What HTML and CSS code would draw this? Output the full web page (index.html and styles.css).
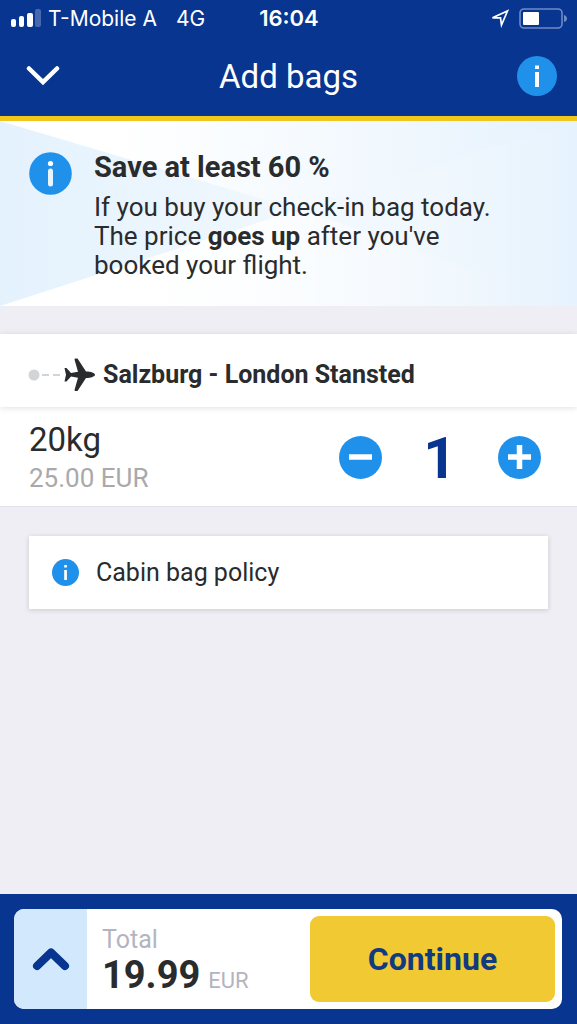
FILE: index.html
```html
<!DOCTYPE html>
<html lang="en">
<head>
  <meta charset="UTF-8">
  <meta name="viewport" content="width=device-width, initial-scale=1.0">
  <title>Add bags</title>
  <link rel="stylesheet" href="styles.css">
</head>
<body>

  <header class="header">
    <div class="status">
      <div class="status__left">
        <svg class="status__signal" width="30" height="18" viewBox="0 0 30 18" aria-hidden="true">
          <rect x="0" y="10" width="5" height="8" rx="2" fill="#fff"/>
          <rect x="8" y="7" width="5" height="11" rx="2" fill="#fff"/>
          <rect x="16" y="4" width="6" height="14" rx="2" fill="#fff"/>
          <rect x="24" y="0" width="6" height="18" rx="2" fill="#4668ae"/>
        </svg>
        <span>T-Mobile A</span>
        <span class="status__network">4G</span>
      </div>
      <time class="status__time">16:04</time>
      <div class="status__right">
        <svg width="20" height="20" viewBox="0 0 20 20" aria-hidden="true">
          <path d="M2.500 9.800 17.500 3 11.500 17 10.500 9.800Z" fill="none" stroke="#fff" stroke-width="1.700"/>
        </svg>
        <svg width="48" height="21" viewBox="0 0 48 21" aria-hidden="true">
          <rect x="1" y="1" width="42" height="19" rx="4" fill="none" stroke="#6f8bc8" stroke-width="1.600"/>
          <rect x="4" y="4" width="16" height="13" rx="1" fill="#fff"/>
          <path d="M45 7c2 .5 3 2 3 3.500s-1 3-3 3.500z" fill="#6f8bc8"/>
        </svg>
      </div>
    </div>

    <div class="navbar">
      <button class="navbar__btn navbar__btn--close" type="button" aria-label="Close">
        <svg width="34" height="22" viewBox="0 0 34 22">
          <path d="M3 3.500 17 17 31 3.500" fill="none" stroke="#fff" stroke-width="4.500" stroke-linecap="round" stroke-linejoin="miter"/>
        </svg>
      </button>
      <h1 class="navbar__title">Add bags</h1>
      <button class="navbar__btn navbar__btn--info" type="button" aria-label="Information">
        <svg width="40" height="40" viewBox="0 0 40 40">
          <circle cx="20" cy="20" r="20" fill="#2091eb"/>
          <path d="M18 9.500h4v3.500h-4zM18 16h4v15h-4z" fill="#fff"/>
        </svg>
      </button>
    </div>
  </header>

  <main class="content">
    <section class="promo">
      <svg class="promo__bg" viewBox="0 0 577 185" preserveAspectRatio="none" aria-hidden="true">
        <defs>
          <linearGradient id="sky" x1="0.2" y1="0" x2="1" y2="0">
            <stop offset="0" stop-color="#fff"/>
            <stop offset=".5" stop-color="#f3f9fe"/>
            <stop offset="1" stop-color="#e6f2fd"/>
          </linearGradient>
          <linearGradient id="fade" x1="0" y1="0" x2="1" y2="0">
            <stop offset="0" stop-color="#e4f2fd"/>
            <stop offset=".5" stop-color="#f1f8fe"/>
            <stop offset="1" stop-color="#eaf4fe" stop-opacity="0"/>
          </linearGradient>
          <linearGradient id="glow" x1="0" y1="0" x2="1" y2="0">
            <stop offset="0" stop-color="#fff"/>
            <stop offset="1" stop-color="#fff" stop-opacity="0"/>
          </linearGradient>
        </defs>
        <rect width="577" height="185" fill="url(#sky)"/>
        <path d="M0 185 300 88 577 0v185z" fill="url(#glow)"/>
        <path d="M0 0 310 92 577 185 577 0 300 88 0 185z" fill="url(#fade)"/>
      </svg>
      <svg class="promo__icon" width="43" height="43" viewBox="0 0 43 43" aria-hidden="true">
        <circle cx="21.500" cy="21.500" r="21.300" fill="#2091eb"/>
        <circle cx="21.500" cy="11.500" r="2.600" fill="#fff"/>
        <path d="M21.500 19v13" stroke="#e8f4fe" stroke-width="5" stroke-linecap="round"/>
      </svg>
      <div class="promo__text">
        <h2 class="promo__title">Save at least 60 %</h2>
        <p class="promo__body">If you buy your check-in bag today.<br>The price <strong>goes up</strong> after you've<br>booked your flight.</p>
      </div>
    </section>

    <section class="flight">
      <div class="flight__route">
        <svg width="68" height="34" viewBox="0 0 68 34" aria-hidden="true">
          <circle cx="6" cy="17" r="5.500" fill="#d3d4d6"/>
          <path d="M14 17h7M25 17h7" stroke="#d3d4d6" stroke-width="2"/>
          <path d="M36.500 10h2l4.500 5 7-1.200L46.500 1.500q0-1 1-1h2L58 13.500c5 0 9 1.500 9 3.300s-4 3.300-9 3.300L49.500 33h-2q-1 0-1-1L50 19.800l-7-1.200-4.500 5h-2l1.500-6.800z" fill="#2a2b2d"/>
        </svg>
        <h2 class="flight__name">Salzburg - London Stansted</h2>
      </div>
      <div class="bag">
        <div class="bag__info">
          <div class="bag__weight">20kg</div>
          <div class="bag__price">25.00 EUR</div>
        </div>
        <div class="counter">
          <button class="counter__btn" type="button" aria-label="Remove bag">
            <svg width="43" height="43" viewBox="0 0 43 43">
              <circle cx="21.500" cy="21.500" r="21.500" fill="#2091eb"/>
              <path d="M10 21h23" stroke="#fff" stroke-width="5.500"/>
            </svg>
          </button>
          <output class="counter__value">1</output>
          <button class="counter__btn" type="button" aria-label="Add bag">
            <svg width="43" height="43" viewBox="0 0 43 43">
              <circle cx="21.500" cy="21.500" r="21.500" fill="#2091eb"/>
              <path d="M10 21h23M21.500 9v24" stroke="#fff" stroke-width="5.500"/>
            </svg>
          </button>
        </div>
      </div>
    </section>

    <a class="policy" href="#cabin-bag-policy">
      <svg width="27" height="27" viewBox="0 0 27 27" aria-hidden="true">
        <circle cx="13.500" cy="13.500" r="13.500" fill="#2091eb"/>
        <path d="M12.200 6h2.700v2.500h-2.700zM12.200 11h2.700v10h-2.700z" fill="#fff"/>
      </svg>
      Cabin bag policy
    </a>
  </main>

  <footer class="footer">
    <div class="summary">
      <button class="summary__toggle" type="button" aria-label="Show price details">
        <svg width="38" height="24" viewBox="0 0 38 24">
          <path d="M5 19 19 5.500 33 19" fill="none" stroke="#073590" stroke-width="8" stroke-linecap="round" stroke-linejoin="round"/>
        </svg>
      </button>
      <div class="summary__total">
        <div class="summary__label">Total</div>
        <div class="summary__price">19.99<span class="summary__currency">EUR</span></div>
      </div>
      <button class="summary__continue" type="button">Continue</button>
    </div>
  </footer>

</body>
</html>
```
FILE: styles.css
```css
* {
  box-sizing: border-box;
}
body {
  display: flex;
  flex-direction: column;
  min-height: 100vh;
  margin: 0;
  background: #efeef4;
  color: #2a2b2d;
  font-family: Roboto, "Liberation Sans", sans-serif;
}
h1, h2, p {
  margin: 0;
}
button {
  padding: 0;
  border: 0;
  background: none;
  font-family: inherit;
  cursor: pointer;
}
svg {
  display: block;
  flex-shrink: 0;
}

/* Header */
.header {
  background: #073590;
  border-bottom: 5px solid #f1c71c;
  color: #fff;
}
.status {
  display: grid;
  grid-template-columns: 1fr auto 1fr;
  align-items: center;
  height: 36px;
  padding: 0 10px 0 11px;
  font-family: Inter, sans-serif;
  font-size: 21px;
}
.status__left,
.status__right {
  display: flex;
  align-items: center;
}
.status__left {
  gap: 7px;
}
.status__network {
  margin-left: 12px;
}
.status__time {
  font-size: 22px;
  font-weight: 600;
}
.status__right {
  justify-content: flex-end;
  gap: 9px;
}
.navbar {
  display: grid;
  grid-template-columns: 1fr auto 1fr;
  align-items: center;
  height: 80px;
  padding: 0 20px;
}
.navbar__btn {
  justify-self: start;
}
.navbar__btn--close {
  padding: 6px;
}
.navbar__btn--info {
  justify-self: end;
}
.navbar__title {
  font-size: 33px;
  font-weight: 400;
}

/* Promo banner */
.promo {
  position: relative;
  display: flex;
  gap: 22px;
  padding: 28px 29px 26px;
}
.promo__bg {
  position: absolute;
  inset: 0;
  z-index: -1;
  width: 100%;
  height: 100%;
}
.promo__icon {
  margin-top: 3px;
}
.promo__title {
  font-size: 29px;
  font-weight: 700;
  line-height: 36px;
}
.promo__body {
  margin-top: 8px;
  font-size: 26px;
  line-height: 29px;
}

/* Flight and bags */
.content {
  flex: 1;
}
.flight {
  margin-top: 28px;
  background: #fff;
  border-bottom: 1px solid #e2e2e6;
}
.flight__route {
  display: flex;
  align-items: center;
  gap: 7px;
  height: 73px;
  padding: 8px 28px 0;
  box-shadow: 0 1px 6px rgba(0, 0, 0, 0.12);
}
.flight__name {
  font-size: 25px;
  font-weight: 700;
}
.bag {
  display: flex;
  align-items: center;
  justify-content: space-between;
  height: 99px;
  padding: 2px 36px 0 29px;
}
.bag__weight {
  font-size: 33px;
  line-height: 40px;
}
.bag__price {
  color: #a9a9ab;
  font-size: 26px;
  line-height: 36px;
}
.counter {
  display: flex;
  align-items: center;
}
.counter__value {
  width: 116px;
  color: #073590;
  font-size: 58px;
  font-weight: 700;
  line-height: 60px;
  text-align: center;
}
.policy {
  display: flex;
  align-items: center;
  gap: 17px;
  height: 73px;
  margin: 29px 29px 0;
  padding: 0 23px;
  background: #fff;
  box-shadow: 0 1px 5px rgba(0, 0, 0, 0.16);
  color: inherit;
  font-size: 25px;
  text-decoration: none;
}

/* Footer */
.footer {
  padding: 15px 15px 15px 14px;
  background: #073590;
}
.summary {
  display: flex;
  height: 100px;
  overflow: hidden;
  border-radius: 10px;
  background: #fff;
}
.summary__toggle {
  display: flex;
  align-items: center;
  justify-content: center;
  width: 73px;
  background: #d2e8fc;
}
.summary__total {
  flex: 1;
  padding: 16px 0 0 15px;
}
.summary__label {
  color: #b3b4bf;
  font-size: 25px;
  line-height: 30px;
}
.summary__price {
  display: flex;
  align-items: baseline;
  gap: 8px;
  font-size: 38px;
  font-weight: 700;
  line-height: 40px;
}
.summary__currency {
  color: #b3b4bf;
  font-size: 22px;
  font-weight: 400;
}
.summary__continue {
  flex: 0 0 245px;
  margin: 7px;
  border-radius: 9px;
  background: #f1c933;
  color: #123a80;
  font-size: 32px;
  font-weight: 700;
}
```
